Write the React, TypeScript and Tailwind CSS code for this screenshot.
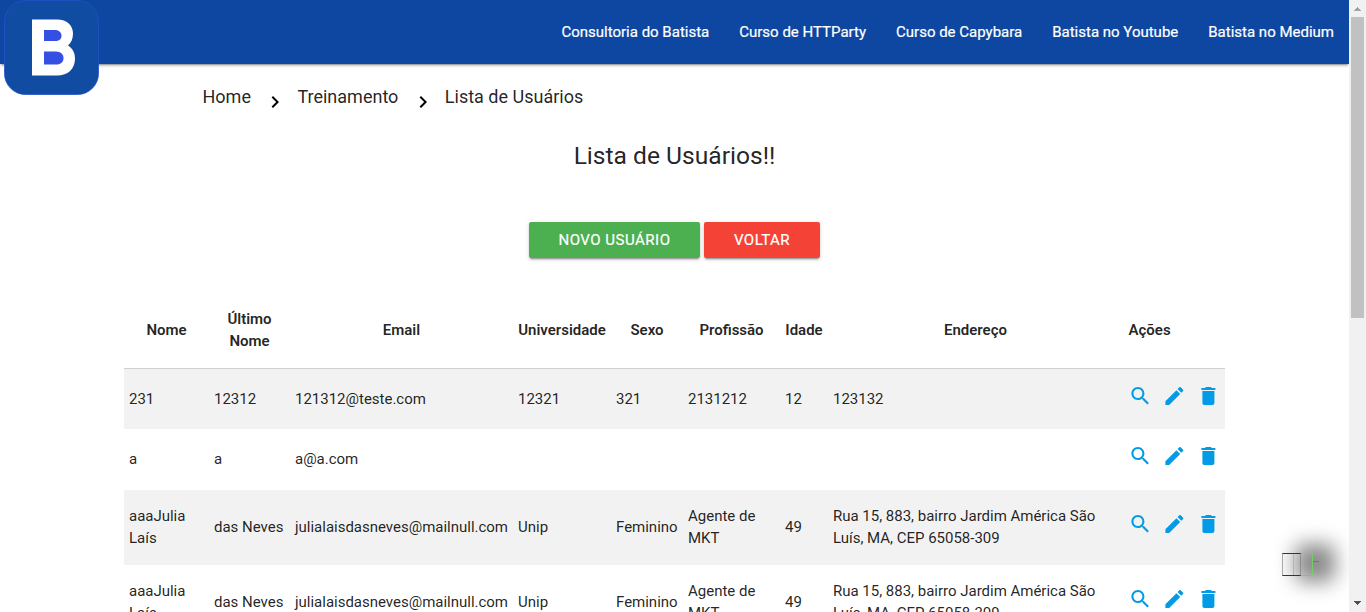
import React from "react";

const links = [
  "Consultoria do Batista",
  "Curso de HTTParty",
  "Curso de Capybara",
  "Batista no Youtube",
  "Batista no Medium",
];

const columns = [
  "Nome",
  "Último Nome",
  "Email",
  "Universidade",
  "Sexo",
  "Profissão",
  "Idade",
  "Endereço",
];

const julia = [
  "aaaJulia Laís",
  "das Neves",
  "julialaisdasneves@mailnull.com",
  "Unip",
  "Feminino",
  "Agente de MKT",
  "49",
  "Rua 15, 883, bairro Jardim América São Luís, MA, CEP 65058-309",
];

const users = [
  { cells: ["231", "12312", "121312@teste.com", "12321", "321", "2131212", "12", "123132"], height: "h-[61px]" },
  { cells: ["a", "a", "a@a.com", "", "", "", "", ""], height: "h-[61px]" },
  { cells: julia, height: "h-[75px]" },
  { cells: julia, height: "h-[75px]" },
];

const icons = [
  "M15.5 14h-.79l-.28-.27C15.41 12.59 16 11.11 16 9.5 16 5.91 13.09 3 9.5 3S3 5.91 3 9.5 5.91 16 9.5 16c1.61 0 3.09-.59 4.23-1.57l.27.28v.79l5 4.99L20.49 19l-4.99-5zm-6 0C7.01 14 5 11.99 5 9.5S7.01 5 9.5 5 14 7.01 14 9.5 11.99 14 9.5 14z",
  "M3 17.25V21h3.75L17.81 9.94l-3.75-3.75L3 17.25zM20.71 7.04c.39-.39.39-1.02 0-1.41l-2.34-2.34c-.39-.39-1.02-.39-1.41 0l-1.83 1.83 3.75 3.75 1.83-1.83z",
  "M6 19c0 1.1.9 2 2 2h8c1.1 0 2-.9 2-2V7H6v12zM19 4h-3.5l-1-1h-5l-1 1H5v2h14V4z",
];

function Logo() {
  return (
    <svg className="absolute left-1 top-0 z-10" width="95" height="95" viewBox="0 0 95 95">
      <rect x="0.5" y="0.5" width="94" height="94" rx="21" fill="#104ca2" stroke="#2450c8" strokeWidth="0.8" />
      <path
        d="M28 19.5H53C63 19.5 69 25.500 69 33.500C69 39 67 43 64 45.500C68 48 71 52 71 58.500C71 69 64 75.500 53 75.500H28Z"
        fill="#fff"
      />
      <path d="M40 30H51C55 30 57.500 32.500 57.500 35.700C57.500 39 55 41 51 41H40Z" fill="#3350e2" />
      <path d="M40 51.500H52C57 51.500 59.500 54.500 59.500 58C59.500 62 57 64.500 52 64.500H40Z" fill="#3350e2" />
    </svg>
  );
}

function Chevron() {
  return (
    <svg className="mt-[10px] shrink-0" width="24" height="24" viewBox="0 0 24 24">
      <path d="M10 6L8.590 7.410 13.170 12l-4.580 4.590L10 18l6-6z" fill="#000" />
    </svg>
  );
}

function Scrollbar() {
  return (
    <div className="flex h-full w-[17px] shrink-0 flex-col items-center justify-between bg-[#f1f1f1]">
      <div className="flex flex-col items-center">
        <svg width="17" height="17" viewBox="0 0 17 17">
          <path d="M8 7h1v1h1v1h1v1h1v1H5v-1h1V9h1V8h1z" fill="#a3a3a3" />
        </svg>
        <div className="h-[301px] w-[13px] bg-[#c1c1c1]" />
      </div>
      <svg width="17" height="17" viewBox="0 0 17 17">
        <path d="M5 6h7v1h-1v1h-1v1H9v1H8V9H7V8H6V7H5z" fill="#505050" />
      </svg>
    </div>
  );
}

export default function App() {
  return (
    <div className="relative flex h-[612px] w-[1366px] overflow-hidden bg-white font-['Roboto',sans-serif] text-[15px] leading-[22px] text-black/87">
      <div className="h-full min-w-0 flex-1 overflow-hidden">
        <Logo />
        <nav className="flex h-16 items-center justify-end bg-[#0d47a1] text-white [-webkit-text-stroke:0.2px_white] shadow-[0_2px_2px_0_rgba(0,0,0,0.14),0_1px_5px_0_rgba(0,0,0,0.12),0_3px_1px_-2px_rgba(0,0,0,0.2)]">
          {links.map((label) => (
            <a key={label} className="whitespace-nowrap px-[15px] font-normal">
              {label}
            </a>
          ))}
        </nav>

        <div className="flex h-[66px] items-start pl-[202.5px] text-[18px] leading-[27px]">
          <span className="mt-[19px]">Home</span>
          <span className="ml-[12.5px] mr-[10px] mt-4 flex"><Chevron /></span>
          <span className="mt-[19px]">Treinamento</span>
          <span className="ml-[12.5px] mr-[10px] mt-4 flex"><Chevron /></span>
          <span className="mt-[19px]">Lista de Usuários</span>
        </div>

        <h1 className="mt-[8px] text-center text-[24.6px] leading-9">Lista de Usuários!!</h1>

        <div className="mt-[48px] flex justify-center gap-1 text-white [-webkit-text-stroke:0.2px_white]">
          <button className="h-9 w-[171px] rounded-[2px] bg-[#4caf50] tracking-[0.5px] shadow-[0_2px_2px_0_rgba(0,0,0,0.14),0_1px_5px_0_rgba(0,0,0,0.12),0_3px_1px_-2px_rgba(0,0,0,0.2)]">
            NOVO USUÁRIO
          </button>
          <button className="h-9 w-[116px] rounded-[2px] bg-[#f44336] tracking-[0.5px] shadow-[0_2px_2px_0_rgba(0,0,0,0.14),0_1px_5px_0_rgba(0,0,0,0.12),0_3px_1px_-2px_rgba(0,0,0,0.2)]">
            VOLTAR
          </button>
        </div>

        <table className="ml-[124px] mt-[33px] w-[1101px] table-fixed border-collapse">
          <colgroup>
            <col className="w-[85px]" />
            <col className="w-[81px]" />
            <col className="w-[223px]" />
            <col className="w-[98px]" />
            <col className="w-[72px]" />
            <col className="w-[97px]" />
            <col className="w-[48px]" />
            <col className="w-[295px]" />
            <col className="w-[102px]" />
          </colgroup>
          <thead>
            <tr className="h-[77px] border-b border-[#d0d0d0]">
              {columns.map((name) => (
                <th key={name} className="px-[5px] pt-[2px] text-center align-middle font-semibold">
                  {name}
                </th>
              ))}
              <th className="pl-[5.5px] pt-[2px] text-left align-middle font-semibold">Ações</th>
            </tr>
          </thead>
          <tbody className="tracking-[-0.01px]">
            {users.map((user, row) => (
              <tr key={row} className={`${user.height} group odd:bg-[#f2f2f2]`}>
                {user.cells.map((value, i) => (
                  <td key={i} className="px-[5px] pb-[2px] pt-0 align-middle group-first:pb-0">
                    {value}
                  </td>
                ))}
                <td className="p-0 align-middle">
                  <div className="flex gap-[10px] pb-[8px] pl-[5px] group-first:pb-[6px]">
                    {icons.map((d) => (
                      <svg key={d} width="24" height="24" viewBox="0 0 24 24" className="shrink-0">
                        <path d={d} fill="#039be5" transform="translate(0.4 0)" />
                      </svg>
                    ))}
                  </div>
                </td>
              </tr>
            ))}
          </tbody>
        </table>
      </div>

      <Scrollbar />

      <div className="absolute left-[1270px] top-[520px] h-[92px] w-[79px] overflow-hidden">
        <div className="ml-[25px] mt-[24px] h-[38px] w-[40px] rounded-lg bg-[#888] blur-[10px]" />
      </div>
      <div className="absolute left-[1293px] top-[553px] h-[23px] w-5 border border-x-[#6fd860]/80 border-y-[#5fe04a]" />
      <div className="absolute left-[1282px] top-[553px] h-[23px] w-[19px] border border-x-[#777]/60 border-y-[#333]" />
      <div className="absolute left-[1313px] top-[561px] h-px w-[6px] bg-[#777]" />
    </div>
  );
}
